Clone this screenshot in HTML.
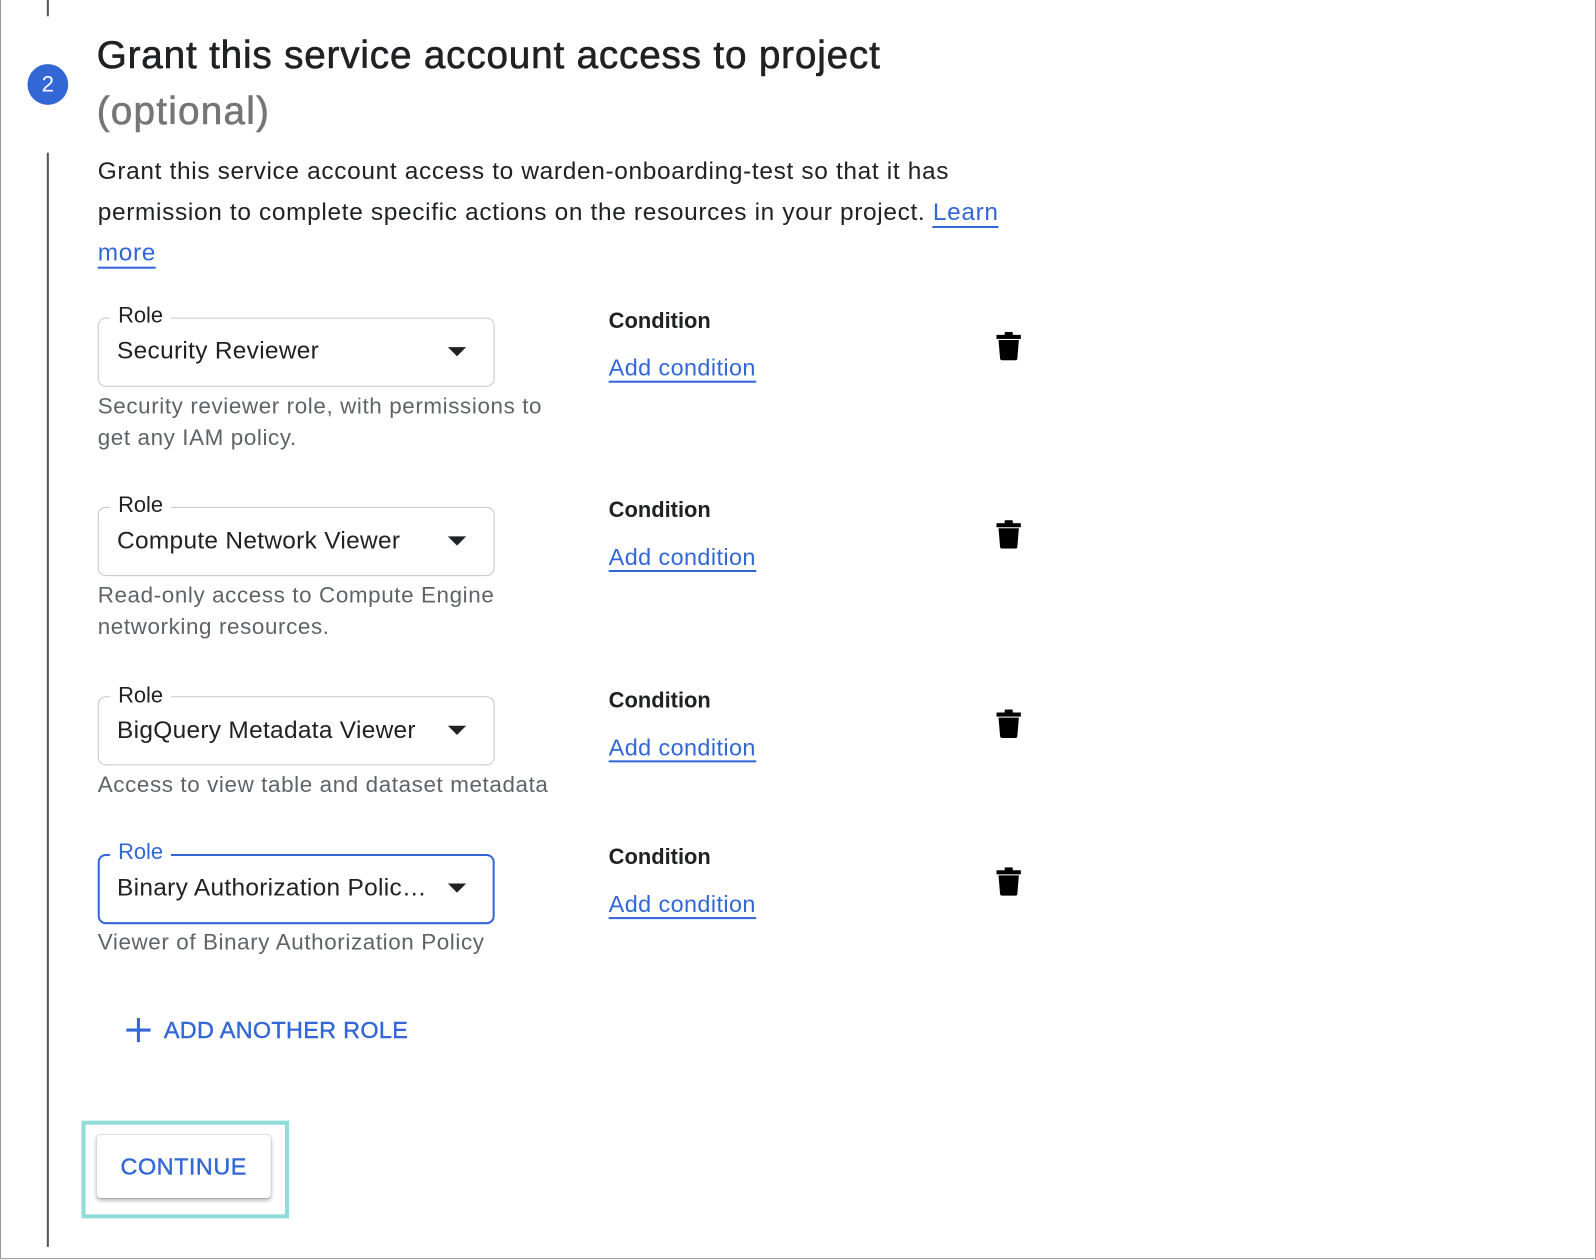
<!DOCTYPE html>
<html><head><meta charset="utf-8"><style>
html,body{margin:0;padding:0;background:#fff;width:1596px;height:1260px;overflow:hidden}
#w{position:absolute;left:0;top:0;width:1568px;height:1238px;transform:scale(1.01786);transform-origin:0 0;font-family:"Liberation Sans",sans-serif;color:#202124}
.a{position:absolute;white-space:nowrap}
.box{position:absolute;left:96px;width:388px;height:66px;border:1px solid #c8c8c8;border-radius:8px}
.lab{position:absolute;left:108px;background:#fff;padding:0 8px;font-size:21.5px;line-height:24px}
.val{position:absolute;left:115px;font-size:24px;letter-spacing:0.3px;line-height:28px}
.arr{position:absolute;left:440px;width:0;height:0;border-left:9px solid transparent;border-right:9px solid transparent;border-top:9px solid #202124}
.help{position:absolute;left:96px;font-size:22px;letter-spacing:0.6px;line-height:31px;color:#5f6368;white-space:nowrap}
.cond{position:absolute;left:598px;font-size:21.5px;font-weight:bold;line-height:24px}
.add{position:absolute;left:598px;font-size:23px;letter-spacing:0.4px;line-height:26px;color:#3367d6;border-bottom:2px solid #3367d6;padding-bottom:0;white-space:nowrap}
.tr{position:absolute;left:979px}
</style></head><body><div id="w">
<div style="position:absolute;left:0;top:0;width:1566px;height:1236px;border:1px solid #9a9a9a;border-top:none"></div>
<div style="position:absolute;left:46px;top:0;width:2px;height:16px;background:#555"></div>
<div style="position:absolute;left:46px;top:150px;width:2px;height:1075px;background:#555"></div>
<div style="position:absolute;left:27px;top:63px;width:40px;height:40px;border-radius:50%;background:#3367d6;color:#fff;font-size:22px;line-height:40px;text-align:center">2</div>
<div class="a" style="left:95px;top:32px;font-size:38px;letter-spacing:0.8px;line-height:46px;color:#202124;-webkit-text-stroke:0.6px #202124">Grant this service account access to project</div>
<div class="a" style="left:95px;top:87px;font-size:38px;letter-spacing:1.2px;line-height:46px;color:#757575;-webkit-text-stroke:0.6px #757575">(optional)</div>
<div class="a" style="left:96px;top:149px;font-size:24px;letter-spacing:0.65px;line-height:40px">Grant this service account access to warden-onboarding-test so that it has<br>permission to complete specific actions on the resources in your project. <span style="color:#3367d6;border-bottom:2px solid #3367d6">Learn</span><br><span style="color:#3367d6;border-bottom:2px solid #3367d6">more</span></div>

<!-- row 1 -->
<div class="box" style="top:312px"></div><div class="lab" style="top:298px">Role</div>
<div class="val" style="top:331px">Security Reviewer</div><div class="arr" style="top:341px"></div>
<div class="help" style="top:383px">Security reviewer role, with permissions to<br>get any IAM policy.</div>
<div class="cond" style="top:303px">Condition</div><div class="add" style="top:348px">Add condition</div>
<svg class="tr" style="top:326px" width="24" height="28" viewBox="0 0 24 28"><rect x="0" y="3" width="24" height="4" fill="#000"/><rect x="8" y="0" width="8" height="4" rx="1" fill="#000"/><path d="M2 8h20l-1.5 18a2 2 0 0 1-2 2h-13a2 2 0 0 1-2-2z" fill="#000"/></svg>

<!-- row 2 -->
<div class="box" style="top:498px"></div><div class="lab" style="top:484px">Role</div>
<div class="val" style="top:518px">Compute Network Viewer</div><div class="arr" style="top:527px"></div>
<div class="help" style="top:569px">Read-only access to Compute Engine<br>networking resources.</div>
<div class="cond" style="top:489px">Condition</div><div class="add" style="top:534px">Add condition</div>
<svg class="tr" style="top:511px" width="24" height="28" viewBox="0 0 24 28"><rect x="0" y="3" width="24" height="4" fill="#000"/><rect x="8" y="0" width="8" height="4" rx="1" fill="#000"/><path d="M2 8h20l-1.5 18a2 2 0 0 1-2 2h-13a2 2 0 0 1-2-2z" fill="#000"/></svg>

<!-- row 3 -->
<div class="box" style="top:684px"></div><div class="lab" style="top:671px">Role</div>
<div class="val" style="top:704px">BigQuery Metadata Viewer</div><div class="arr" style="top:713px"></div>
<div class="help" style="top:755px">Access to view table and dataset metadata</div>
<div class="cond" style="top:676px">Condition</div><div class="add" style="top:721px">Add condition</div>
<svg class="tr" style="top:697px" width="24" height="28" viewBox="0 0 24 28"><rect x="0" y="3" width="24" height="4" fill="#000"/><rect x="8" y="0" width="8" height="4" rx="1" fill="#000"/><path d="M2 8h20l-1.5 18a2 2 0 0 1-2 2h-13a2 2 0 0 1-2-2z" fill="#000"/></svg>

<!-- row 4 -->
<div class="box" style="top:839px;border:2px solid #3367d6;width:386px;height:65px"></div><div class="lab" style="top:825px;color:#3367d6">Role</div>
<div class="val" style="top:859px">Binary Authorization Polic…</div><div class="arr" style="top:868px"></div>
<div class="help" style="top:910px">Viewer of Binary Authorization Policy</div>
<div class="cond" style="top:830px">Condition</div><div class="add" style="top:875px">Add condition</div>
<svg class="tr" style="top:852px" width="24" height="28" viewBox="0 0 24 28"><rect x="0" y="3" width="24" height="4" fill="#000"/><rect x="8" y="0" width="8" height="4" rx="1" fill="#000"/><path d="M2 8h20l-1.5 18a2 2 0 0 1-2 2h-13a2 2 0 0 1-2-2z" fill="#000"/></svg>

<svg class="a" style="left:124px;top:1000px" width="24" height="24" viewBox="0 0 24 24"><path d="M12 0v24M0 12h24" stroke="#3367d6" stroke-width="3"/></svg>
<div class="a" style="left:161px;top:997px;font-size:23px;letter-spacing:0.3px;line-height:30px;color:#3367d6;-webkit-text-stroke:0.4px #3367d6">ADD ANOTHER ROLE</div>

<div style="position:absolute;left:80px;top:1101px;width:196px;height:88px;border:4px solid #8fdcd9"></div>
<div style="position:absolute;left:95px;top:1115px;width:171px;height:62px;background:#fff;border-radius:4px;box-shadow:0 2px 4px rgba(0,0,0,.3),0 0 1px rgba(0,0,0,.2);color:#3367d6;font-size:23px;letter-spacing:0.5px;line-height:62px;text-align:center;-webkit-text-stroke:0.4px #3367d6">CONTINUE</div>
</div></body></html>
